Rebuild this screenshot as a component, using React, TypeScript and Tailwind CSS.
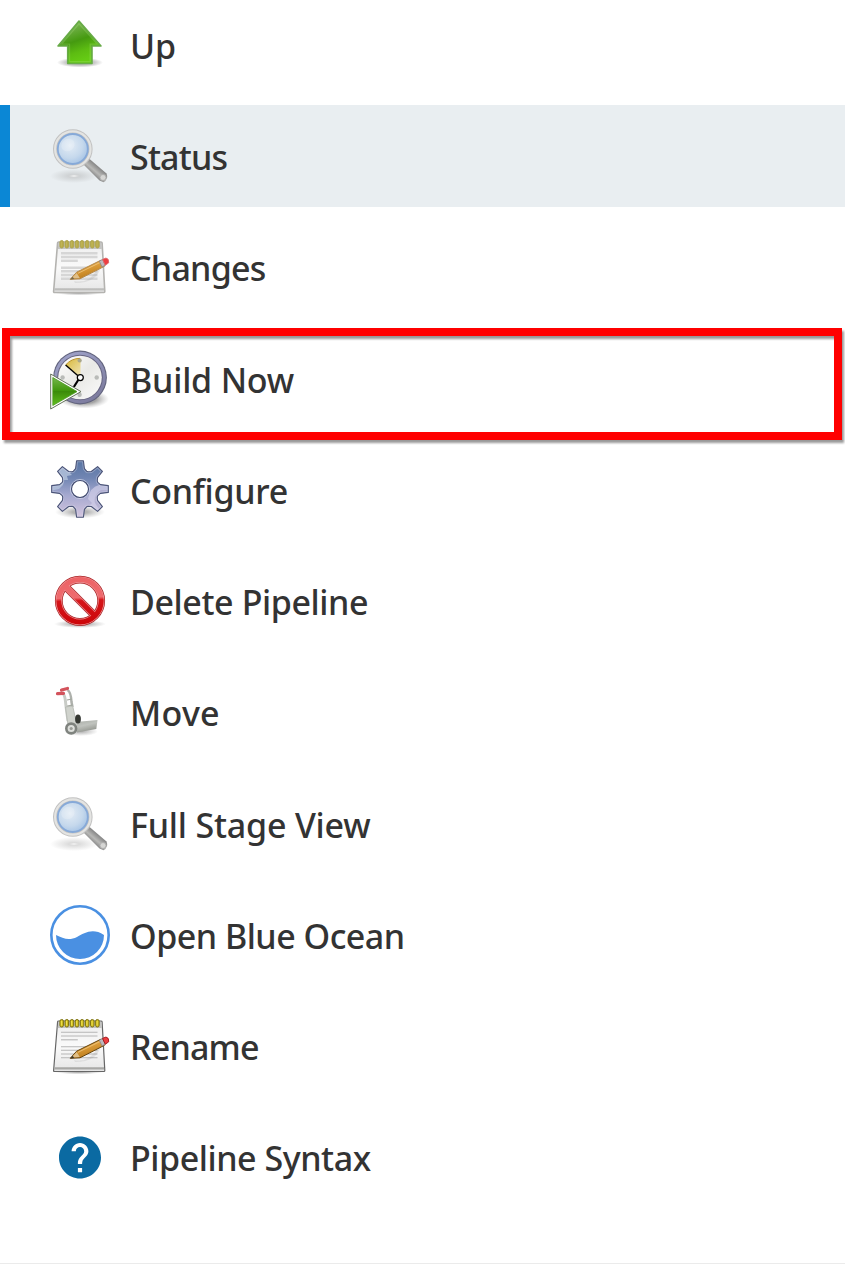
import type { ReactNode } from "react";

function Svg({ children }: { children: ReactNode }) {
  return (
    <svg viewBox="0 0 60 60" className="size-[60px] shrink-0 overflow-visible" aria-hidden="true">
      {children}
    </svg>
  );
}

function UpIcon() {
  return (
    <Svg>
      <defs>
        <radialGradient id="up-shadow">
          <stop offset="0" stopColor="#000" stopOpacity=".4" />
          <stop offset=".65" stopColor="#000" stopOpacity=".2" />
          <stop offset="1" stopColor="#000" stopOpacity="0" />
        </radialGradient>
        <linearGradient id="up-fill" x1="0" y1="0" x2=".35" y2="1">
          <stop offset="0" stopColor="#8cc667" />
          <stop offset=".3" stopColor="#68ab3c" />
          <stop offset=".55" stopColor="#459a10" />
          <stop offset=".8" stopColor="#5dbd12" />
          <stop offset="1" stopColor="#65cb14" />
        </linearGradient>
      </defs>
      <ellipse cx="30" cy="47.5" rx="23" ry="5" fill="url(#up-shadow)" />
      <path d="M29 6L51 31H42V48.5H17.7V31H8Z" fill="url(#up-fill)" stroke="#68ab48" strokeWidth="1.6" strokeLinejoin="round" />
      <path d="M29 8.8L47.5 29.2H40.2V46.7H19.5V29.2H11.5Z" fill="none" stroke="#b5e58c" strokeOpacity=".25" strokeWidth="1.3" />
    </Svg>
  );
}

function MagnifierIcon({ id }: { id: string }) {
  return (
    <Svg>
      <defs>
        <radialGradient id={`${id}-shadow`}>
          <stop offset="0" stopColor="#fff" stopOpacity=".9" />
          <stop offset=".3" stopColor="#999" stopOpacity=".3" />
          <stop offset="1" stopColor="#999" stopOpacity="0" />
        </radialGradient>
        <radialGradient id={`${id}-glass`} cx=".42" cy=".4" r=".6">
          <stop offset="0" stopColor="#e3ecf5" />
          <stop offset=".6" stopColor="#c5d8ec" />
          <stop offset="1" stopColor="#9fbfe4" />
        </radialGradient>
        <linearGradient id={`${id}-handle`} gradientUnits="userSpaceOnUse" x1="41" y1="47" x2="47" y2="40">
          <stop offset="0" stopColor="#8a8a8a" />
          <stop offset=".45" stopColor="#b8b8b6" />
          <stop offset="1" stopColor="#8a8a8a" />
        </linearGradient>
      </defs>
      <ellipse cx="24" cy="50" rx="24" ry="7" fill={`url(#${id}-shadow)`} />
      <path d="M33.5 38.5L39 32.5L56.5 47.5Q59 53 53.5 56.3L49.5 54.5Z" fill={`url(#${id}-handle)`} />
      <circle cx="53" cy="51.5" r="3" fill="#d6d6d4" stroke="#aaa" strokeWidth=".8" />
      <circle cx="22.8" cy="23" r="17.7" fill={`url(#${id}-glass)`} stroke="#c2c2c2" strokeWidth="4.2" />
      <circle cx="22.8" cy="23" r="17.7" fill="none" stroke="#e4e4e2" strokeWidth="2.2" />
      <circle cx="22.8" cy="23" r="15" fill="none" stroke="#86a9d8" strokeWidth="1.8" />
      <ellipse cx="18" cy="19" rx="7" ry="6" fill="#fff" opacity=".2" transform="rotate(-35 18 19)" />
    </Svg>
  );
}

const ringXs = [11.7, 16.8, 21.9, 27, 32.1, 37.2, 42.3, 47.4];
const lineYs = [16.3, 20, 30.7, 34.3, 38, 41.7];

function NotepadIcon({ id, soft = false }: { id: string; soft?: boolean }) {
  const edge = soft ? "#b4b3b0" : "#666";
  return (
    <Svg>
      <defs>
        <radialGradient id={`${id}-shadow`}>
          <stop offset="0" stopColor="#555" stopOpacity=".7" />
          <stop offset="1" stopColor="#777" stopOpacity="0" />
        </radialGradient>
        <linearGradient id={`${id}-paper`} x1="0" y1="0" x2="0" y2="1">
          <stop offset="0" stopColor="#d9d9d9" />
          <stop offset=".16" stopColor="#f1f1f1" />
          <stop offset=".5" stopColor="#fafafa" />
          <stop offset="1" stopColor="#e5e5e5" />
        </linearGradient>
        <linearGradient id={`${id}-wood`} x1="0" y1="0" x2=".45" y2="1">
          <stop offset="0" stopColor="#efbd68" />
          <stop offset=".5" stopColor="#dc9d3a" />
          <stop offset="1" stopColor="#b97918" />
        </linearGradient>
      </defs>
      <ellipse cx="29" cy="55.5" rx="25" ry="3" fill={`url(#${id}-shadow)`} />
      <path d="M7.6 5.8Q7.7 5 8.5 5H51Q52 5 52.1 5.8L54.8 54.5Q54.8 55.5 54 55.5H4.5Q3.5 55.5 3.6 54.5Z" fill={`url(#${id}-paper)`} stroke={edge} strokeWidth={soft ? 1.6 : 1.2} />
      <path d="M8.3 6H51.5L51.9 12H7.9Z" fill="#c4c4c2" />
      <path d="M4.5 51.2H54L54.2 53.5H4.3Z" fill={soft ? "#bdbdbb" : "#a8a8a6"} />
      <g stroke={soft ? "#d6d6d6" : "#b6b6b6"} strokeWidth={soft ? 2.4 : 1.1}>
        {lineYs.map((y) => (
          <path key={y} d={`M11 ${y}H47.5`} />
        ))}
        <path d="M11 23.8H27.8" />
      </g>
      {ringXs.map((x) => (
        <g key={x}>
          <rect x={x - 1.75} y="3.5" width="3.5" height="7.5" rx="1.7" fill={soft ? "#b8ac49" : "#d0bd22"} stroke={soft ? "#b0a650" : "#7c7110"} strokeWidth="1" />
          <path d={`M${x - 0.3} 5V9.5`} stroke={soft ? "#c1b658" : "#f2e44c"} strokeWidth="1" />
        </g>
      ))}
      <path d="M24 44Q40 47 47 32L51 29Q48 46 25 46Z" fill="#777" opacity=".14" />
      <g>
        <path d="M20.3 42.3L26.6 35.2L51.3 23L54.5 29.3L30 41.8Z" fill={`url(#${id}-wood)`} stroke={soft ? "#b58a4d" : "#66430b"} strokeWidth="1" strokeLinejoin="round" />
        <path d="M21.3 41.5L26.7 35.9L29.8 41Z" fill="#e0bf88" />
        <path d="M20 42.5L22.7 39.8L24.3 42Z" fill={soft ? "#7a6a4c" : "#40382c"} />
        <path d="M28 36.3L51 25" stroke="#f2cd8c" strokeOpacity=".7" strokeWidth="1" />
        <path d="M49.3 24.2L52.5 22.4L55.3 28.2L52 29.9Z" fill="#bbb9bd" stroke="#847f86" strokeWidth=".7" />
        <path d="M52.5 22.4L56 21Q59.3 21.8 58.7 25.8L55.3 28.3Z" fill="#ed3e42" stroke={soft ? "#dc6a6c" : "#9f1417"} strokeWidth=".9" />
      </g>
    </Svg>
  );
}

function BuildIcon() {
  return (
    <Svg>
      <defs>
        <radialGradient id="clock-shadow">
          <stop offset=".5" stopColor="#333" stopOpacity=".45" />
          <stop offset="1" stopColor="#777" stopOpacity="0" />
        </radialGradient>
        <linearGradient id="clock-ring" x1="0" y1="0" x2=".6" y2="1">
          <stop offset="0" stopColor="#a2a6cd" />
          <stop offset="1" stopColor="#7e7da0" />
        </linearGradient>
        <linearGradient id="clock-face" x1="0" y1="0" x2="1" y2="1">
          <stop offset="0" stopColor="#fff" />
          <stop offset=".5" stopColor="#e9e9e6" />
          <stop offset="1" stopColor="#fbfbfb" />
        </linearGradient>
        <linearGradient id="clock-wedge" x1="0" y1="0" x2=".8" y2="1">
          <stop offset="0" stopColor="#d8b635" />
          <stop offset="1" stopColor="#eee3b2" />
        </linearGradient>
        <linearGradient id="play-fill" x1="0" y1="0" x2="0" y2="1">
          <stop offset="0" stopColor="#75b74b" />
          <stop offset=".48" stopColor="#3f960b" />
          <stop offset=".5" stopColor="#3b8b0a" />
          <stop offset="1" stopColor="#61bf1c" />
        </linearGradient>
      </defs>
      <ellipse cx="34" cy="50" rx="25" ry="9.5" fill="url(#clock-shadow)" />
      <circle cx="30" cy="28.5" r="26.9" fill="#62647e" />
      <circle cx="30" cy="28.5" r="25.8" fill="url(#clock-ring)" />
      <circle cx="30" cy="28.5" r="22.8" fill="#666481" />
      <circle cx="30" cy="28.5" r="21.8" fill="url(#clock-face)" />
      <g fill="#b9bbb8">
        <circle cx="29.6" cy="11.4" r="2.2" />
        <circle cx="46.7" cy="28.5" r="2.2" />
        <circle cx="12.6" cy="28.5" r="2.2" />
        <circle cx="29.6" cy="45.7" r="2.2" />
      </g>
      <path d="M30.5 28.5L15.6 16Q21.5 9.3 30.5 9.4Z" fill="url(#clock-wedge)" />
      <path d="M15.6 16Q21.5 9.3 30 9.4" fill="none" stroke="#bc9325" strokeWidth="1" />
      <circle cx="29.5" cy="11.5" r="2" fill="#aaa789" />
      <path d="M15.6 16L30 28.5" stroke="#000" strokeWidth="1.4" />
      <path d="M29.5 29L23.8 38" stroke="#000" strokeWidth="2.2" />
      <circle cx="30.3" cy="28.6" r="3" fill="#fff" stroke="#000" strokeWidth="1.2" />
      <path d="M.7 25L31 42.6L.7 60Z" fill="#fff" stroke="#64725a" strokeWidth="1" />
      <path d="M2.8 28.5L27 42.6L2.8 56.5Z" fill="url(#play-fill)" stroke="#4a9c1e" strokeWidth=".8" />
    </Svg>
  );
}

const gearTooth: [number, number][] = [
  [-6.6, -17.8],
  [-4.4, -20.4],
  [-3.4, -28.3],
  [3.4, -28.3],
  [4.4, -20.4],
  [6.6, -17.8],
];

const gearOutline =
  Array.from({ length: 8 }, (_, i) => {
    const angle = (i * Math.PI) / 4;
    return gearTooth
      .map(([x, y], j) => {
        const px = 30 + x * Math.cos(angle) - y * Math.sin(angle);
        const py = 29 + x * Math.sin(angle) + y * Math.cos(angle);
        return `${i === 0 && j === 0 ? "M" : "L"}${px.toFixed(2)} ${py.toFixed(2)}`;
      })
      .join("");
  }).join("") + "Z";

function GearIcon() {
  return (
    <Svg>
      <defs>
        <radialGradient id="gear-shadow">
          <stop offset=".3" stopColor="#444" stopOpacity=".4" />
          <stop offset="1" stopColor="#777" stopOpacity="0" />
        </radialGradient>
        <linearGradient id="gear-fill" x1="0" y1="0" x2="0" y2="1">
          <stop offset="0" stopColor="#5774a3" />
          <stop offset=".3" stopColor="#7085b2" />
          <stop offset=".6" stopColor="#a4a8cf" />
          <stop offset="1" stopColor="#d4c5df" />
        </linearGradient>
        <clipPath id="gear-clip">
          <path d={gearOutline} />
        </clipPath>
      </defs>
      <ellipse cx="30" cy="52" rx="25" ry="6.5" fill="url(#gear-shadow)" />
      <path d={gearOutline} fill="url(#gear-fill)" />
      <g clipPath="url(#gear-clip)">
        <path d="M0 0H23V11L20 13L22 15L17 16L18 20L14 20L13 25L9 29L0 31Z" fill="#b5c4dc" opacity=".8" />
        <path d="M60 22L49 25Q40 27 38 39L42 43L39 46L43 49L47 60H60Z" fill="#d1cee8" opacity=".7" />
        <path d="M60 30L51 30Q43 35 45 43L51 52L60 52Z" fill="#aaa7cb" opacity=".65" />
      </g>
      <path d={gearOutline} fill="none" stroke="#e0e3f1" strokeOpacity=".35" strokeWidth="3" clipPath="url(#gear-clip)" />
      <path d={gearOutline} fill="none" stroke="#4b5478" strokeWidth="1.1" strokeLinejoin="round" />
      <circle cx="30" cy="29" r="9.5" fill="none" stroke="#d5daea" strokeWidth="1" opacity=".75" />
      <circle cx="30" cy="29" r="8.5" fill="#fff" stroke="#3f486d" strokeWidth="1.1" />
    </Svg>
  );
}

function DeleteIcon() {
  return (
    <Svg>
      <defs>
        <radialGradient id="delete-shadow">
          <stop offset="0" stopColor="#333" stopOpacity=".6" />
          <stop offset="1" stopColor="#777" stopOpacity="0" />
        </radialGradient>
        <linearGradient id="delete-fill" gradientUnits="userSpaceOnUse" x1="20" y1="5" x2="22" y2="55">
          <stop offset="0" stopColor="#ec6265" />
          <stop offset=".44" stopColor="#ef6b6e" />
          <stop offset=".5" stopColor="#d51519" />
          <stop offset="1" stopColor="#cc0508" />
        </linearGradient>
      </defs>
      <ellipse cx="30" cy="53" rx="26" ry="4" fill="url(#delete-shadow)" />
      <circle cx="30" cy="29.8" r="21.2" fill="#fff" stroke="#aa2023" strokeWidth="7.8" />
      <path d="M16 16L44 44" stroke="#af2a2d" strokeWidth="8" />
      <circle cx="30" cy="29.8" r="21.2" fill="none" stroke="#ef9496" strokeWidth="6.4" />
      <path d="M15 15L45 45" stroke="#ed8386" strokeWidth="6.4" />
      <circle cx="30" cy="29.8" r="21.2" fill="none" stroke="url(#delete-fill)" strokeWidth="5" />
      <path d="M15 15L45 45" stroke="url(#delete-fill)" strokeWidth="5.2" />
    </Svg>
  );
}

function MoveIcon() {
  return (
    <Svg>
      <defs>
        <linearGradient id="plate-fill" x1="0" y1="0" x2=".4" y2="1">
          <stop offset="0" stopColor="#a9ada7" />
          <stop offset=".5" stopColor="#c0c3be" />
          <stop offset="1" stopColor="#92958f" />
        </linearGradient>
        <radialGradient id="move-shadow">
          <stop offset="0" stopColor="#777" stopOpacity=".6" />
          <stop offset="1" stopColor="#888" stopOpacity="0" />
        </radialGradient>
        <filter id="move-soften" x="-.1" y="-.1" width="1.2" height="1.2">
          <feGaussianBlur stdDeviation=".6" />
        </filter>
      </defs>
      <g filter="url(#move-soften)">
        <ellipse cx="31" cy="49.5" rx="17" ry="4.5" fill="url(#move-shadow)" />
        <path d="M26 40L47.5 38L46.3 47L27 50.5Z" fill="url(#plate-fill)" />
        <path d="M12.5 11Q15 12 16 24L18 39" fill="none" stroke="#c9ccc7" strokeWidth="3" />
        <path d="M17.5 8Q21 10 21.5 20L22.5 25" fill="none" stroke="#aeb1ac" strokeWidth="2.5" />
        <path d="M15.5 25L22.7 24L26.5 41L18 43Z" fill="#d0d3cd" stroke="#b3b6b0" strokeWidth=".8" />
        <path d="M17 18L22 17M17.3 24L22.5 23" stroke="#a1a69d" strokeWidth="1.2" />
        <ellipse cx="28" cy="37" rx="2.9" ry="4.6" fill="#343733" />
        <path d="M7.5 11.6L13.5 11.4M11.5 8L17.5 6.5" stroke="#d3525c" strokeWidth="3.2" strokeLinecap="round" />
        <circle cx="21.2" cy="46.5" r="4.9" fill="#dddfdb" stroke="#7f837e" strokeWidth="2.6" />
        <circle cx="21.2" cy="46.5" r="1.6" fill="#999c96" />
      </g>
    </Svg>
  );
}

function OceanIcon() {
  return (
    <Svg>
      <circle cx="30" cy="30" r="28.7" fill="#fff" stroke="#4a90e2" strokeWidth="2.6" />
      <path d="M6 30C13 33.5 19 36 27 32C34 28 43 22.5 54 30A24 24 0 0 1 6 30Z" fill="#4a90e2" />
    </Svg>
  );
}

function HelpIcon() {
  return (
    <Svg>
      <path
        transform="translate(4.8 5.4) scale(2.1)"
        fill="#0b6aa2"
        d="M12 2C6.48 2 2 6.48 2 12s4.48 10 10 10 10-4.48 10-10S17.52 2 12 2zm1 17h-2v-2h2v2zm2.07-7.75l-.9.92C13.45 12.9 13 13.5 13 15h-2v-.5c0-1.1.45-2.1 1.17-2.83l1.24-1.26c.37-.36.59-.86.59-1.41 0-1.1-.9-2-2-2s-2 .9-2 2H8c0-2.21 1.79-4 4-4s4 1.79 4 4c0 .88-.36 1.68-.93 2.25z"
      />
    </Svg>
  );
}

type Task = { label: string; icon: ReactNode; tracking: string; active?: boolean; highlighted?: boolean };

const tasks: Task[] = [
  { label: "Up", icon: <UpIcon />, tracking: "tracking-[0px]" },
  { label: "Status", icon: <MagnifierIcon id="status" />, tracking: "tracking-[-0.8px]", active: true },
  { label: "Changes", icon: <NotepadIcon id="changes" soft />, tracking: "tracking-[-0.75px]" },
  { label: "Build Now", icon: <BuildIcon />, tracking: "tracking-[-0.2px]", highlighted: true },
  { label: "Configure", icon: <GearIcon />, tracking: "tracking-[-0.3px]" },
  { label: "Delete Pipeline", icon: <DeleteIcon />, tracking: "tracking-[-0.4px]" },
  { label: "Move", icon: <MoveIcon />, tracking: "tracking-[0.3px]" },
  { label: "Full Stage View", icon: <MagnifierIcon id="stage" />, tracking: "tracking-[-0.2px]" },
  { label: "Open Blue Ocean", icon: <OceanIcon />, tracking: "tracking-[-0.5px]" },
  { label: "Rename", icon: <NotepadIcon id="rename" />, tracking: "tracking-[-0.8px]" },
  { label: "Pipeline Syntax", icon: <HelpIcon />, tracking: "tracking-[-0.45px]" },
];

export default function App() {
  return (
    <div className="flex h-[1264px] w-[845px] flex-col justify-between overflow-hidden bg-white font-['Noto_Sans','Open_Sans',sans-serif] text-[#333]">
      <nav className="-mt-[6.27px] flex flex-col gap-[9.27px]">
        {tasks.map((task) => (
          <a
            key={task.label}
            className={`relative flex h-[102px] shrink-0 items-center gap-5 border-l-[10px] pl-10 ${
              task.active ? "border-[#0b87d5] bg-[#e9eef1]" : "border-transparent"
            }`}
          >
            {task.icon}
            <span className={`pt-0.5 text-[34px] leading-[48px] font-medium whitespace-nowrap ${task.tracking}`}>
              {task.label}
            </span>
            {task.highlighted && (
              <span className="absolute top-[0.5px] -left-2 h-28 w-[840px] border-8 border-[#ff0000] drop-shadow-[2px_3px_1px_rgba(0,0,0,0.4)]" />
            )}
          </a>
        ))}
      </nav>
      <div className="h-px shrink-0 bg-[#ebebeb]" />
    </div>
  );
}
